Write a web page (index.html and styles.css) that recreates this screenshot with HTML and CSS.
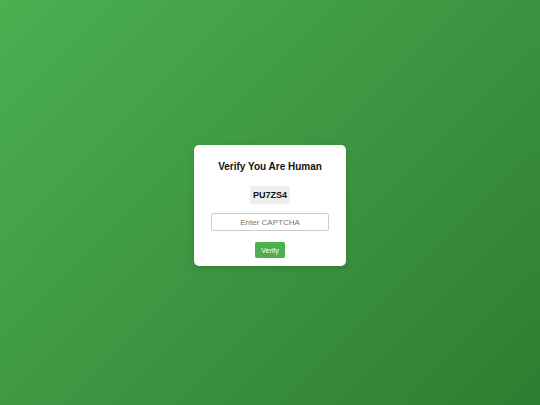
FILE: index.html
```html
<!DOCTYPE html>
<html>
<head>
<meta charset="utf-8">
<link rel="stylesheet" href="styles.css">
</head>
<body>
<div class="card">
  <h2 class="title">Verify You Are Human</h2>
  <div class="captcha">PU7ZS4</div>
  <input class="field" type="text" placeholder="Enter CAPTCHA">
  <button class="btn">Verify</button>
</div>
</body>
</html>
```
FILE: styles.css
```css
html, body {
  margin: 0;
  padding: 0;
}
body {
  width: 540px;
  height: 405px;
  background: linear-gradient(135deg, #4caf50, #2e7d32);
  display: flex;
  align-items: center;
  justify-content: center;
  font-family: "Liberation Sans", Arial, sans-serif;
}
.card {
  width: 152px;
  box-sizing: border-box;
  background: #fff;
  border-radius: 5px;
  padding: 15px 17px 8px;
  display: flex;
  flex-direction: column;
  align-items: center;
  box-shadow: 0 2px 6px rgba(0,0,0,0.15);
  margin-top: 6px;
}
.title {
  margin: 0;
  font-size: 10px;
  line-height: 14px;
  font-weight: bold;
  color: #111;
}
.captcha {
  margin-top: 12px;
  height: 18px;
  line-height: 18px;
  padding: 0 3px;
  background: #eee;
  border-radius: 2px;
  font-size: 9px;
  font-weight: bold;
  color: #111;
}
.field {
  margin-top: 9px;
  width: 118px;
  height: 18px;
  box-sizing: border-box;
  border: 1px solid #ccc;
  border-radius: 2px;
  text-align: center;
  font-family: inherit;
  font-size: 8px;
  padding: 0;
  outline: none;
}
.field::placeholder {
  color: #777;
}
.btn {
  margin-top: 11px;
  height: 16px;
  padding: 0 6px;
  border: none;
  border-radius: 2px;
  background: #4caf50;
  color: #fff;
  font-family: inherit;
  font-size: 7px;
}
```
